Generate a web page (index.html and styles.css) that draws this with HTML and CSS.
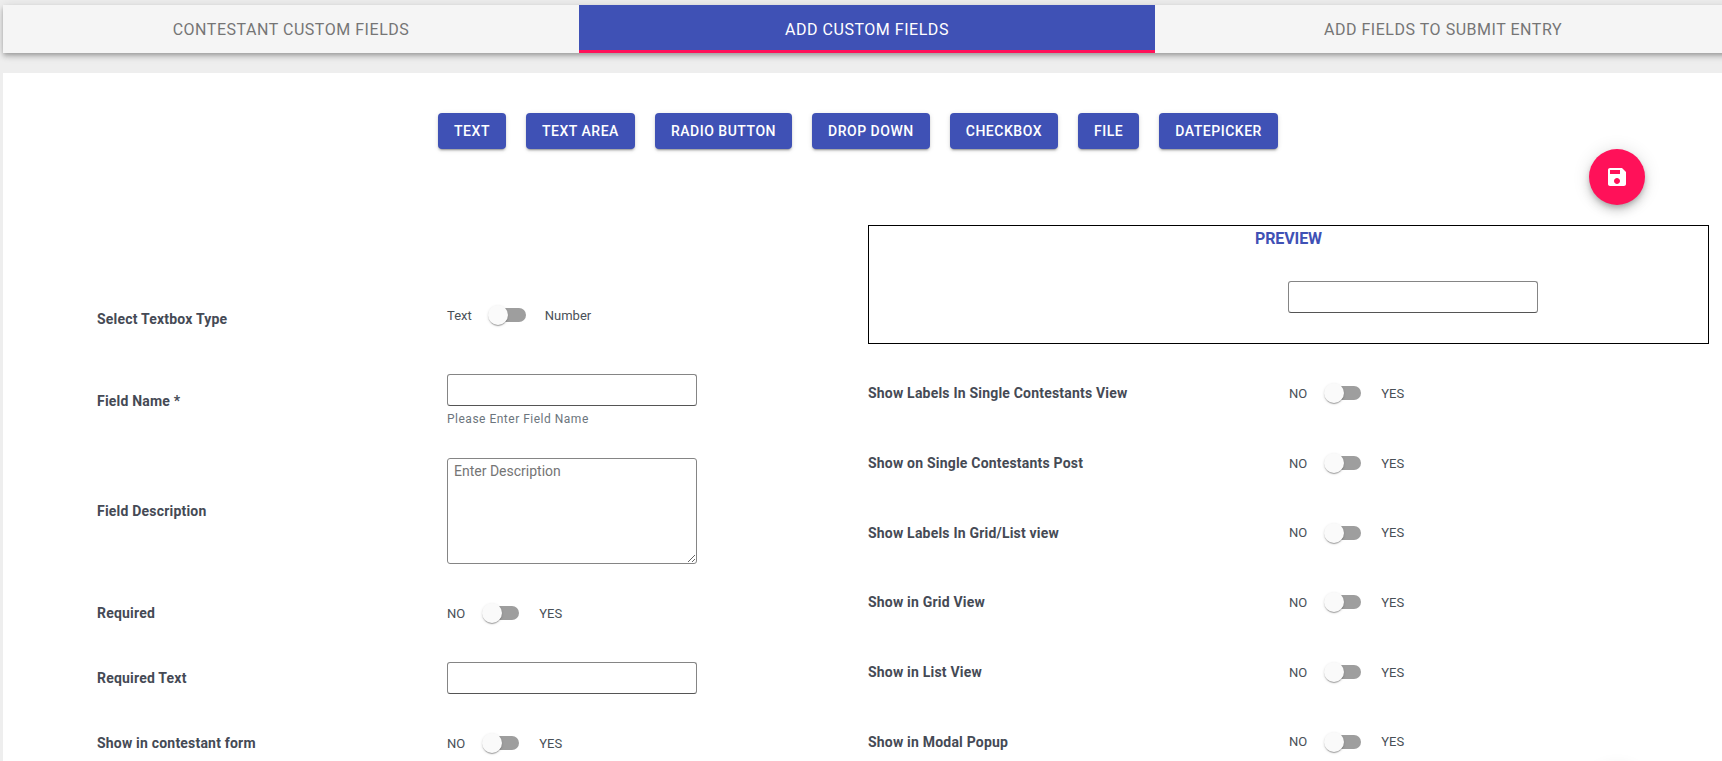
FILE: index.html
```html
<!DOCTYPE html>
<html lang="en">
<head>
<meta charset="utf-8">
<title>Add Custom Fields</title>
<link rel="stylesheet" href="styles.css">
</head>
<body>
<div class="page">
  <nav class="tabs">
    <div class="tab">CONTESTANT CUSTOM FIELDS</div>
    <div class="tab active">ADD CUSTOM FIELDS</div>
    <div class="tab">ADD FIELDS TO SUBMIT ENTRY</div>
  </nav>
  <main class="panel">
    <div class="btn-row">
      <button class="btn">TEXT</button>
      <button class="btn">TEXT AREA</button>
      <button class="btn">RADIO BUTTON</button>
      <button class="btn">DROP DOWN</button>
      <button class="btn">CHECKBOX</button>
      <button class="btn">FILE</button>
      <button class="btn">DATEPICKER</button>
    </div>
    <button class="fab" aria-label="Save">
      <svg viewBox="0 0 24 24" width="24" height="24"><path fill="#fff" d="M17 3H5c-1.11 0-2 .9-2 2v14c0 1.1.89 2 2 2h14c1.1 0 2-.9 2-2V7l-4-4zm-5 16c-1.66 0-3-1.34-3-3s1.34-3 3-3 3 1.34 3 3-1.34 3-3 3zm3-10H5V5h10v4z"/></svg>
    </button>
    <div class="fab fab-lower"></div>
    <div class="form">
      <section class="col-left">
        <div class="row row-first">
          <label class="label">Select Textbox Type</label>
          <div class="switch switch-type">
            <span class="sw-text">Text</span><span class="toggle"><span class="thumb"></span></span><span class="sw-text">Number</span>
          </div>
        </div>
        <div class="row">
          <label class="label">Field Name *</label>
          <div>
            <input class="input" type="text">
            <div class="hint">Please Enter Field Name</div>
          </div>
        </div>
        <div class="row">
          <label class="label">Field Description</label>
          <textarea class="textarea" placeholder="Enter Description"></textarea>
        </div>
        <div class="row row-switch">
          <label class="label">Required</label>
          <div class="switch"><span class="sw-text">NO</span><span class="toggle"><span class="thumb"></span></span><span class="sw-text">YES</span></div>
        </div>
        <div class="row">
          <label class="label">Required Text</label>
          <input class="input" type="text">
        </div>
        <div class="row row-switch">
          <label class="label">Show in contestant form</label>
          <div class="switch"><span class="sw-text">NO</span><span class="toggle"><span class="thumb"></span></span><span class="sw-text">YES</span></div>
        </div>
      </section>
      <section class="col-right">
        <div class="preview">
          <div class="preview-title">PREVIEW</div>
          <div class="preview-body"><input class="input" type="text"></div>
        </div>
        <div class="rrow"><label class="label">Show Labels In Single Contestants View</label><div class="switch"><span class="sw-text">NO</span><span class="toggle"><span class="thumb"></span></span><span class="sw-text">YES</span></div></div>
        <div class="rrow"><label class="label">Show on Single Contestants Post</label><div class="switch"><span class="sw-text">NO</span><span class="toggle"><span class="thumb"></span></span><span class="sw-text">YES</span></div></div>
        <div class="rrow"><label class="label">Show Labels In Grid/List view</label><div class="switch"><span class="sw-text">NO</span><span class="toggle"><span class="thumb"></span></span><span class="sw-text">YES</span></div></div>
        <div class="rrow"><label class="label">Show in Grid View</label><div class="switch"><span class="sw-text">NO</span><span class="toggle"><span class="thumb"></span></span><span class="sw-text">YES</span></div></div>
        <div class="rrow"><label class="label">Show in List View</label><div class="switch"><span class="sw-text">NO</span><span class="toggle"><span class="thumb"></span></span><span class="sw-text">YES</span></div></div>
        <div class="rrow"><label class="label">Show in Modal Popup</label><div class="switch"><span class="sw-text">NO</span><span class="toggle"><span class="thumb"></span></span><span class="sw-text">YES</span></div></div>
      </section>
    </div>
  </main>
</div>
</body>
</html>
```
FILE: styles.css
```css
* { box-sizing: border-box; }
html, body { margin: 0; height: 761px; overflow: hidden; background: #eeeeee; }
body { font-family: Roboto, "Liberation Sans", sans-serif; color: #3e4450; }
.page { width: 1731px; height: 761px; overflow: hidden; padding: 5px 0 0 3px; }

.tabs { display: flex; height: 48px; background: #f5f5f5; box-shadow: 0 2px 4px -1px rgba(0,0,0,.2), 0 4px 5px 0 rgba(0,0,0,.14), 0 1px 10px 0 rgba(0,0,0,.12); }
.tab { flex: 1; display: flex; align-items: center; justify-content: center; font-size: 16px; font-weight: 400; letter-spacing: .53px; color: #757575; }
.tab.active { background: #3f51b5; color: #fff; border-bottom: 3px solid #ff1159; padding-top: 3px; }

.panel { position: relative; margin-top: 20px; height: 688px; overflow: hidden; background: #fff; padding-top: 40px; }
.btn-row { display: flex; justify-content: center; gap: 20px; padding-right: 18px; }
.btn { height: 36px; padding: 0 16px; border: 0; border-radius: 4px; background: #3f51b5; color: #fff; font: 500 14px Roboto, sans-serif; letter-spacing: .52px; box-shadow: 0 3px 1px -2px rgba(0,0,0,.2), 0 2px 2px 0 rgba(0,0,0,.14), 0 1px 5px 0 rgba(0,0,0,.12); }
.fab { position: absolute; left: 1586px; top: 76px; width: 56px; height: 56px; border: 0; border-radius: 50%; background: #ff1159; display: flex; align-items: center; justify-content: center; padding: 0; box-shadow: 0 3px 5px -1px rgba(0,0,0,.2), 0 6px 10px 0 rgba(0,0,0,.14), 0 1px 18px 0 rgba(0,0,0,.12); }
.fab-lower { top: 695px; }

.form { display: grid; grid-template-columns: 771px 841px; padding-left: 94px; margin-top: 76px; }
.label { font-size: 14px; font-weight: 700; letter-spacing: .2px; color: #454a55; }

.col-left { display: flex; flex-direction: column; gap: 31px; padding-top: 76px; }
.row { display: grid; grid-template-columns: 350px 1fr; align-items: center; }
.row-first { height: 36px; margin-bottom: 6px; }
.row-switch { height: 36px; }

.input { display: block; width: 250px; height: 32px; padding: 0 7px; background: #fff; border: 1px solid #858585; border-bottom-color: #555; border-radius: 3px; outline: 0; }
.textarea { display: block; width: 250px; height: 106px; padding: 4px 6px; margin: 0; border: 1px solid #858585; border-radius: 3px; font: 14px Roboto, sans-serif; outline: 0; color: #3e4450; }
.textarea::placeholder { color: #757575; }
.hint { margin-top: 5px; height: 16px; line-height: 16px; font-size: 12px; letter-spacing: .5px; color: #6c757d; }

.switch { display: flex; align-items: center; height: 24px; }
.switch-type { margin-top: -8px; }
.sw-text { font-size: 13px; color: #495057; }
.toggle { position: relative; display: block; width: 35px; height: 14px; margin: 0 20px 0 19px; border-radius: 7px; background: #9e9e9e; }
.switch-type .toggle { width: 36px; margin: 0 19px 0 18px; }
.thumb { position: absolute; left: -2px; top: -3px; width: 20px; height: 20px; border-radius: 50%; background: #fafafa; box-shadow: 0 2px 1px -1px rgba(0,0,0,.2), 0 1px 1px 0 rgba(0,0,0,.14), 0 1px 3px 0 rgba(0,0,0,.12); }

.preview { height: 119px; border: 1px solid #000; }
.preview-title { text-align: center; font-size: 16px; font-weight: 700; letter-spacing: -.1px; line-height: 26px; color: #3f51b5; }
.preview-body { padding: 29px 0 0 419px; }
.preview + .rrow { margin-top: 14.5px; }

.rrow { display: grid; grid-template-columns: 421px 1fr; align-items: center; height: 69.7px; }
```
